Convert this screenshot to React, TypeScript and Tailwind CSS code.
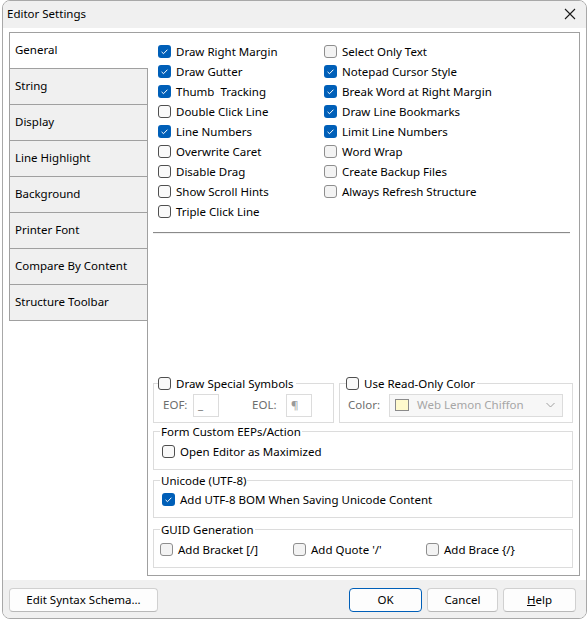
import React from "react";

const font = { fontFamily: '"Noto Sans", "Liberation Sans", sans-serif' };

type BoxProps = { checked?: boolean; light?: boolean };

function Box({ checked, light }: BoxProps) {
  if (checked) {
    return (
      <span className="w-[13px] h-[13px] rounded-[3px] bg-[#005fb8] flex items-center justify-center shrink-0">
        <svg width="13" height="13" viewBox="0 0 13 13">
          <path d="M3.6 6.9 L5.5 8.7 L9.4 4.7" stroke="#ffffff" strokeWidth="1" fill="none" />
        </svg>
      </span>
    );
  }
  return (
    <span
      className={
        light
          ? "w-[13px] h-[13px] rounded-[3px] border border-[#8e8e8e] bg-[#f3f3f3] shrink-0"
          : "w-[13px] h-[13px] rounded-[3px] border border-[#4f4f4f] bg-[#f9f9f9] shrink-0"
      }
    />
  );
}

function Check({ label, checked, light }: { label: string; checked?: boolean; light?: boolean }) {
  return (
    <div className="h-[20px] flex items-center gap-[5px]">
      <Box checked={checked} light={light} />
      <span className="whitespace-pre">{label}</span>
    </div>
  );
}

const tabs = [
  "General",
  "String",
  "Display",
  "Line Highlight",
  "Background",
  "Printer Font",
  "Compare By Content",
  "Structure Toolbar",
];

const leftCol: [string, boolean][] = [
  ["Draw Right Margin", true],
  ["Draw Gutter", true],
  ["Thumb  Tracking", true],
  ["Double Click Line", false],
  ["Line Numbers", true],
  ["Overwrite Caret", false],
  ["Disable Drag", false],
  ["Show Scroll Hints", false],
  ["Triple Click Line", false],
];

const rightCol: [string, boolean][] = [
  ["Select Only Text", false],
  ["Notepad Cursor Style", true],
  ["Break Word at Right Margin", true],
  ["Draw Line Bookmarks", true],
  ["Limit Line Numbers", true],
  ["Word Wrap", false],
  ["Create Backup Files", false],
  ["Always Refresh Structure", false],
];

function Btn({ children, w, primary }: { children: React.ReactNode; w: string; primary?: boolean }) {
  return (
    <div
      className={
        (primary
          ? "border-[#005fb8] "
          : "border-[#d0d0d0] border-b-[#b8b8b8] ") +
        w +
        " h-[24px] rounded-[4px] border bg-[#fdfdfd] flex items-center justify-center"
      }
    >
      {children}
    </div>
  );
}

export default function App() {
  return (
    <div className="w-[588px] h-[620px] bg-white text-[11.5px] text-black leading-4" style={font}>
      <div className="ml-[2px] w-[585px] h-[619px] border border-[#a8a8a8] rounded-lg overflow-hidden flex flex-col">
        {/* title bar */}
        <div className="h-[27px] bg-[#f0f0f0] flex items-center justify-between pl-[4px] pr-[10px]">
          <span className="text-[11.5px]">Editor Settings</span>
          <svg width="12" height="12" viewBox="0 0 12 12">
            <path d="M1 1 L11 11 M11 1 L1 11" stroke="#1a1a1a" strokeWidth="1.1" />
          </svg>
        </div>

        {/* body */}
        <div className="flex-1 bg-white pt-[4px] pl-[6px] pr-[6px] pb-[4px]">
          <div className="flex h-[544px]">
            <div className="w-[138px] flex flex-col">
              {tabs.map((t, i) => (
                <div
                  key={t}
                  className={
                    i === 0
                      ? "h-[36px] w-[139px] relative z-10 bg-white border-l border-t border-[#a0a0a0] flex items-center pl-[5px]"
                      : i === tabs.length - 1
                      ? "h-[37px] bg-[#f0f0f0] border-l border-t border-b border-[#a0a0a0] flex items-center pl-[5px]"
                      : "h-[36px] bg-[#f0f0f0] border-l border-t border-[#a0a0a0] flex items-center pl-[5px]"
                  }
                >
                  {t}
                </div>
              ))}
            </div>

            <div className="flex-1 border border-[#a0a0a0] flex flex-col pb-[7px]">
              <div className="flex pt-[9px] pl-[10px]">
                <div className="w-[166px]">
                  {leftCol.map(([l, c]) => (
                    <Check key={l} label={l} checked={c} />
                  ))}
                </div>
                <div>
                  {rightCol.map(([l, c]) => (
                    <Check key={l} label={l} checked={c} light={!c} />
                  ))}
                </div>
              </div>

              <div className="mt-[10px] ml-[5px] mr-[9px] border-t border-[#8a8a8a] border-b border-b-[#f0f0f0]" />

              <div className="mt-auto pl-[5px] pr-[6px] flex flex-col">
                <div className="flex gap-[5px]">
                  <fieldset className="w-[181px] h-[47px] border border-[#dcdcdc]">
                    <legend className="ml-[4px] pr-[2px]">
                      <div className="h-[16px] flex items-center gap-[5px]">
                        <Box />
                        <span>Draw Special Symbols</span>
                      </div>
                    </legend>
                    <div className="flex items-center h-[23px] mt-[2px] pl-[9px] text-[#6d6d6d]">
                      <span className="w-[30px]">EOF:</span>
                      <div className="w-[26px] h-[23px] border border-[#dcdcdc] pl-[4px] flex items-center">_</div>
                      <span className="ml-[33px] w-[34px]">EOL:</span>
                      <div className="w-[26px] h-[23px] border border-[#dcdcdc] pl-[4px] flex items-center text-[#9a9a9a]">
                        ¶
                      </div>
                    </div>
                  </fieldset>
                  <fieldset className="flex-1 h-[47px] border border-[#dcdcdc]">
                    <legend className="ml-[6px] pr-[2px]">
                      <div className="h-[16px] flex items-center gap-[5px]">
                        <Box />
                        <span>Use Read-Only Color</span>
                      </div>
                    </legend>
                    <div className="flex items-center h-[23px] mt-[2px] pl-[8px] text-[#6d6d6d]">
                      <span className="w-[41px]">Color:</span>
                      <div className="w-[174px] h-[23px] border border-[#dcdcdc] bg-[#f7f7f7] flex items-center pl-[5px] pr-[7px]">
                        <span className="w-[14px] h-[12px] border border-[#8a8a8a] bg-[#fffacd]" />
                        <span className="ml-[8px] text-[#a6a6a6] flex-1">Web Lemon Chiffon</span>
                        <svg width="9" height="6" viewBox="0 0 9 6">
                          <path d="M0.5 1 L4.5 5 L8.5 1" stroke="#a0a0a0" strokeWidth="1" fill="none" />
                        </svg>
                      </div>
                    </div>
                  </fieldset>
                </div>

                <fieldset className="mt-[1px] h-[46px] border border-[#dcdcdc]">
                  <legend className="ml-[6px] px-px">Form Custom EEPs/Action</legend>
                  <div className="pl-[8px] mt-[2px]">
                    <Check label="Open Editor as Maximized" />
                  </div>
                </fieldset>

                <fieldset className="mt-[3px] h-[45px] border border-[#dcdcdc]">
                  <legend className="ml-[6px] px-px">Unicode (UTF-8)</legend>
                  <div className="pl-[8px] mt-[1px]">
                    <Check label="Add UTF-8 BOM When Saving Unicode Content" checked />
                  </div>
                </fieldset>

                <fieldset className="mt-[4px] h-[46px] border border-[#dcdcdc]">
                  <legend className="ml-[6px] px-px">GUID Generation</legend>
                  <div className="pl-[6px] mt-[2px] flex">
                    <div className="w-[133px]">
                      <Check label="Add Bracket [/]" light />
                    </div>
                    <div className="w-[133px]">
                      <Check label="Add Quote '/'" light />
                    </div>
                    <div className="w-[133px]">
                      <Check label="Add Brace {/}" light />
                    </div>
                  </div>
                </fieldset>
              </div>
            </div>
          </div>
        </div>

        {/* bottom bar */}
        <div className="h-[39px] bg-[#f0f0f0] flex items-start pt-[8px] pl-[6px] pr-[10px]">
          <Btn w="w-[149px]">Edit Syntax Schema...</Btn>
          <div className="flex-1" />
          <div className="flex gap-[5px]">
            <Btn w="w-[73px]" primary>
              OK
            </Btn>
            <Btn w="w-[71px]">Cancel</Btn>
            <Btn w="w-[73px]">
              <span>
                <span className="underline">H</span>elp
              </span>
            </Btn>
          </div>
        </div>
      </div>
    </div>
  );
}
